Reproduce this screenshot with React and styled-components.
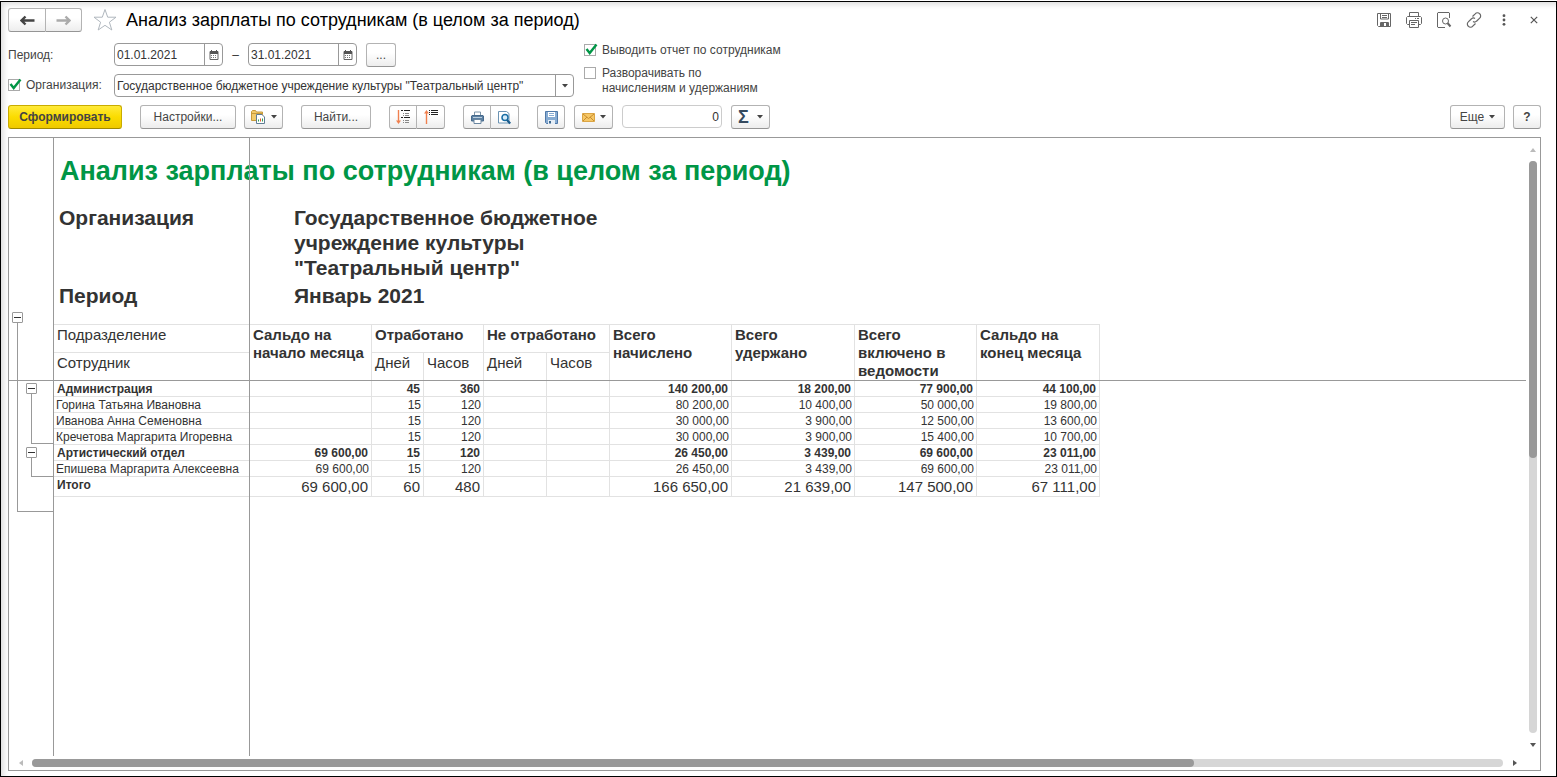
import React from 'react';
import styled, { createGlobalStyle, css } from 'styled-components';

const GlobalStyle = createGlobalStyle`
  * {
    box-sizing: border-box;
  }
  body {
    margin: 0;
    background: #fff;
    color: #333;
    font-family: "Liberation Sans", Arial, sans-serif;
    font-size: 12px;
  }
  button, input, select {
    font: inherit;
    color: inherit;
  }
`;

const Window = styled.div`
  display: flex;
  flex-direction: column;
  min-height: calc(100vh - 1px);
  margin-top: 1px;
  padding: 0 15px 5px 7px;
  border: 1px solid #000;
  box-shadow: inset 6px 6px 6px -4px #d8d8d8;
`;

const TitleBar = styled.header`
  display: flex;
  align-items: center;
  height: 36px;
  margin-bottom: 5px;
`;

const Title = styled.h1`
  flex: 1;
  margin: 0 0 0 9px;
  color: #000;
  font-size: 18px;
  font-weight: 400;
`;

const ButtonGroup = styled.div`
  display: flex;
  button + button {
    border-left: 0;
    border-radius: 0 3px 3px 0;
  }
  button:first-child:not(:last-child) {
    border-radius: 3px 0 0 3px;
  }
`;

const Button = styled.button`
  display: inline-flex;
  align-items: center;
  justify-content: center;
  gap: 5px;
  min-width: ${({ $width }) => $width || 28}px;
  height: 24px;
  padding: 0;
  border: 1px solid #b3b3b3;
  border-bottom-color: #959595;
  border-radius: 3px;
  background: linear-gradient(#fff 40%, #ededed);
  color: #444;
  font-size: 12px;
  ${({ $primary }) => $primary && css`
    border-color: #c9ac00;
    border-bottom-color: #a08900;
    background: linear-gradient(#ffea3a, #fbdc00 50%, #efc900);
    font-weight: 700;
  `}
`;

const StarButton = styled.button`
  display: flex;
  margin-left: 11px;
  padding: 0;
  border: 0;
  background: none;
`;

const WindowTools = styled.div`
  display: flex;
  gap: 6px;
  margin-right: -5px;
`;

const ToolButton = styled.button`
  display: flex;
  align-items: center;
  justify-content: center;
  width: 24px;
  height: 24px;
  padding: 0;
  border: 0;
  background: none;
  color: #666;
`;

const Filters = styled.div`
  display: flex;
  gap: 10px;
  margin-bottom: 8px;
`;

const FilterColumn = styled.div`
  display: flex;
  flex-direction: column;
  gap: 8px;
  width: 566px;
`;

const FilterRow = styled.div`
  display: flex;
  align-items: center;
  height: 23px;
`;

const FilterLabel = styled.div`
  width: 106px;
  color: #444;
`;

const Field = styled.div`
  display: flex;
  position: relative;
  width: ${({ $width }) => $width}px;
  height: 23px;
  overflow: hidden;
  border: 1px solid ${({ $muted }) => ($muted ? '#ccc' : '#999')};
  border-radius: 4px;
  background: #fff;
`;

const fieldText = css`
  flex: 1;
  min-width: 0;
  padding: 0 2px;
  border: 0;
  background: none;
  outline: 0;
`;

const TextInput = styled.input`
  ${fieldText}
  text-align: ${({ $align }) => $align || 'left'};
`;

const Select = styled.select`
  ${fieldText}
  appearance: none;
`;

const FieldButton = styled.button`
  display: flex;
  align-items: center;
  justify-content: center;
  width: 18px;
  padding: 0;
  border: 0;
  border-left: 1px solid #999;
  background: none;
`;

const SelectArrow = styled.span`
  display: flex;
  align-items: center;
  justify-content: center;
  width: 18px;
  border-left: 1px solid #999;
  pointer-events: none;
`;

const Dash = styled.span`
  width: 25px;
  text-align: center;
`;

const CheckColumn = styled.div`
  display: flex;
  flex-direction: column;
  gap: 8px;
`;

const CheckLabel = styled.label`
  display: flex;
  gap: 6px;
  max-width: 200px;
  color: #444;
  line-height: 15px;
`;

const Checkbox = styled.input`
  flex: none;
  appearance: none;
  width: 12px;
  height: 12px;
  margin: 1px 0 0;
  border: 1px solid #aaa;
  background: #fff;
`;

const CheckBoxWrap = styled.span`
  display: inline-flex;
  position: relative;
  height: 15px;
  svg {
    position: absolute;
    top: 0;
    left: 0;
    pointer-events: none;
  }
`;

const Toolbar = styled.div`
  display: flex;
  align-items: center;
  height: 24px;
  margin-bottom: 8px;
`;

const ToolSection = styled.div`
  display: flex;
  gap: ${({ $gap }) => $gap || 8}px;
  margin-right: 18px;
`;

const ToolEnd = styled.div`
  display: flex;
  gap: 8px;
  margin-left: auto;
`;

const PeriodButton = styled(Button)`
  margin-left: 9px;
`;

const Sigma = styled.span`
  padding-right: 3px;
  color: #34495e;
  font-size: 18px;
  font-weight: 700;
`;

const Sheet = styled.main`
  display: grid;
  flex: 1;
  grid-template: 1fr 14px / 1fr 14px;
  border: 1px solid #999;
`;

const Viewport = styled.div`
  display: flex;
  position: relative;
  min-width: 0;
  overflow: hidden;
`;

const Gutter = styled.div`
  flex: none;
  width: 45px;
  padding: 174px 0 0 3px;
  border-right: 1px solid #999;
`;

const Toggle = styled.button`
  display: flex;
  align-items: center;
  justify-content: center;
  width: 11px;
  height: 11px;
  padding: 0;
  border: 1px solid #999;
  border-radius: 1px;
  background: #fff;
  &::before {
    width: 7px;
    height: 1px;
    background: #333;
    content: "";
  }
`;

const Bracket = styled.div`
  height: ${({ $height }) => $height}px;
  margin-left: 5px;
  padding: ${({ $nested }) => ($nested ? '60px 0 0 8px' : 0)};
  border: solid #999;
  border-width: 0 0 1px 1px;
`;

const Branch = styled.div`
  margin-bottom: 3px;
`;

const Report = styled.div`
  flex: 1;
  padding-top: 17px;
`;

const ReportTitle = styled.h2`
  margin: 0 0 18px 6px;
  color: #009646;
  font-size: 27px;
  line-height: 32px;
`;

const Params = styled.dl`
  display: grid;
  grid-template-columns: 235px 320px;
  row-gap: 3px;
  margin: 0 0 16px 5px;
  font-size: 21px;
  font-weight: 700;
  line-height: 25px;
  dt, dd {
    margin: 0;
  }
`;

const Table = styled.table`
  width: 1046px;
  border-spacing: 0;
  border-top: 1px solid #e2e2e2;
  table-layout: fixed;
`;

const cell = css`
  padding: 0 2px 0 3px;
  border: solid #e2e2e2;
  border-width: 0 1px 1px 0;
`;

const HeadCell = styled.th`
  ${cell}
  height: 28px;
  padding-top: 1px;
  font-size: 15px;
  font-weight: ${({ $light }) => ($light ? 400 : 700)};
  line-height: 18px;
  text-align: left;
  vertical-align: top;
`;

const NameCell = styled.th`
  ${cell}
  padding-top: 1px;
  padding-left: ${({ $kind }) => ($kind === 'person' ? 2 : 3)}px;
  font-size: 12px;
  font-weight: ${({ $kind }) => ($kind === 'person' ? 400 : 700)};
  line-height: 14px;
  text-align: left;
  vertical-align: top;
  white-space: nowrap;
`;

const NumCell = styled.td`
  ${cell}
  padding-top: 1px;
  padding-right: ${({ $kind }) => ($kind === 'person' ? 2 : 3)}px;
  font-size: ${({ $kind }) => ($kind === 'total' ? 15 : 12)}px;
  font-weight: ${({ $kind }) => ($kind === 'group' ? 700 : 400)};
  line-height: ${({ $kind }) => ($kind === 'total' ? 18 : 14)}px;
  text-align: right;
`;

const FreezeRow = styled.div`
  position: absolute;
  top: 242px;
  right: 0;
  left: 0;
  height: 1px;
  background: #999;
`;

const FreezeColumn = styled.div`
  position: absolute;
  top: 0;
  bottom: 0;
  left: 240px;
  width: 1px;
  background: #999;
`;

const ScrollBar = styled.div`
  display: flex;
  flex-direction: ${({ $vertical }) => ($vertical ? 'column' : 'row')};
  align-items: center;
`;

const ScrollArrow = styled.button`
  display: flex;
  flex: none;
  align-items: center;
  justify-content: center;
  width: ${({ $vertical }) => ($vertical ? 14 : 23)}px;
  height: ${({ $vertical }) => ($vertical ? 23 : 14)}px;
  padding: 0;
  border: 0;
  background: none;
`;

const Track = styled.div`
  flex: 1;
  width: 8px;
  height: 8px;
  border-radius: 4px;
  background: #d6d6d6;
`;

const Thumb = styled.div`
  width: ${({ $vertical }) => ($vertical ? '100%' : '79%')};
  height: ${({ $vertical }) => ($vertical ? '52%' : '100%')};
  border-radius: 4px;
  background: #999;
`;

const Caret = () => (
  <svg width="6" height="4" viewBox="0 0 6 4">
    <path d="M0 0h6L3 3.5z" fill="#444" />
  </svg>
);

const TRIANGLES = {
  up: 'M0 5h6L3 1z',
  down: 'M0 1h6L3 5z',
  left: 'M5 0v6L1 3z',
  right: 'M1 0v6l4-3z',
};

const Triangle = ({ dir, color }) => (
  <svg width="6" height="6" viewBox="0 0 6 6">
    <path d={TRIANGLES[dir]} fill={color} />
  </svg>
);

const Arrow = ({ back }) => (
  <svg width="15" height="11" viewBox="0 0 15 11">
    <path
      d={back ? 'M14.5 5.500H2M5.500 1.500l-4 4 4 4' : 'M.5 5.500H13M9.500 1.500l4 4-4 4'}
      fill="none"
      stroke={back ? '#444' : '#aaa'}
      strokeWidth="2.400"
    />
  </svg>
);

const StarIcon = () => (
  <svg width="24" height="24" viewBox="0 0 24 24">
    <path
      d="M12 1.500l2.700 7.700h8.300l-6.600 5 2.400 7.800-6.800-4.700L5.200 22l2.400-7.800-6.600-5h8.300z"
      fill="#fff"
      stroke="#b0b7be"
    />
  </svg>
);

const CalendarIcon = () => (
  <svg width="10" height="10" viewBox="0 0 10 10">
    <path d="M1 1.500h8v8H1z" fill="#fff" stroke="#666" />
    <path d="M1 1h8v3H1z" fill="#555" />
    <path d="M2.500 0v2M7.500 0v2" stroke="#555" />
    <path d="M2 5.500h6M2 7.500h6" stroke="#777" strokeDasharray="1 1" />
  </svg>
);

const CheckMark = () => (
  <svg width="14" height="13" viewBox="0 0 14 13">
    <path d="M2.500 6l3.200 4L12.500 1.500" fill="none" stroke="#009646" strokeWidth="2.400" />
  </svg>
);

const SaveOutline = () => (
  <svg width="16" height="16" viewBox="0 0 16 16" fill="none" stroke="#666">
    <path d="M1.500 1.500h13v13h-12l-1-1z" />
    <path d="M4.500 1.500v5.500h8V1.500M6 3.500h5M6 5.500h5M4.500 14.500v-4h8v4" />
    <path d="M5 11h3v3H5zM10 11h2v3h-2z" fill="#666" stroke="none" />
  </svg>
);

const PrintOutline = () => (
  <svg width="18" height="16" viewBox="0 0 18 16" fill="none" stroke="#666">
    <path d="M4.500 4.500v-4h9v4M4.500 12.500h-2l-1-1v-6l1-1h13l1 1v6l-1 1h-2" />
    <path d="M4.500 8.500h9v7h-9zM6 10.500h6M6 12.500h4M10 6.500h1M12 6.500h2" />
  </svg>
);

const PreviewOutline = () => (
  <svg width="16" height="16" viewBox="0 0 16 16" fill="none" stroke="#666">
    <path d="M9 15.500H2l-.5-.5V1l.5-.5h11l.5.500v5" />
    <circle cx="9.500" cy="9" r="3" />
    <path d="M11.500 11l3 3.500" strokeWidth="2" />
  </svg>
);

const LinkOutline = () => (
  <svg width="16" height="16" viewBox="0 0 16 16" fill="none" stroke="#666" strokeWidth="1.200">
    <path d="M6.500 4.500l2.700-2.700a2.900 2.900 0 0 1 4.500 0 2.900 2.900 0 0 1 0 4.300L10.500 9.200a2.700 2.700 0 0 1-3.500.3" />
    <path d="M9.500 11.500l-2.700 2.700a2.900 2.900 0 0 1-4.500 0 2.900 2.900 0 0 1 0-4.300L5.500 6.800A2.700 2.700 0 0 1 9 6.500" />
  </svg>
);

const DotsIcon = () => (
  <svg width="4" height="12" viewBox="0 0 4 12" fill="#555">
    <circle cx="2" cy="1.700" r="1.400" />
    <circle cx="2" cy="6" r="1.400" />
    <circle cx="2" cy="10.300" r="1.400" />
  </svg>
);

const CloseIcon = () => (
  <svg width="8" height="8" viewBox="0 0 8 8">
    <path d="M.8.8l6.400 6.400M7.200.8L.8 7.200" stroke="#555" strokeWidth="1.200" />
  </svg>
);

const VariantsIcon = () => (
  <svg width="15" height="14" viewBox="0 0 15 14">
    <path d="M.5 10.500V1.500l1-1h3l1 1.500h6v8.500z" fill="#f2cb6c" stroke="#c79a3b" />
    <path d="M1 3.500h10" stroke="#c79a3b" />
    <path d="M5.500 4.500h5.500l2.500 2.500v6.500h-8z" fill="#fff" stroke="#607d94" />
    <path d="M7.500 11.500v-2M11.500 11.500v-3" stroke="#2e9e50" />
    <path d="M9.500 11.500v-3" stroke="#e4572e" />
  </svg>
);

const ExpandIcon = () => (
  <svg width="14" height="16" viewBox="0 0 14 16">
    <path d="M2.500 1v12" stroke="#f0804f" strokeWidth="1.400" />
    <path d="M0 11.500h5l-2.500 3.500z" fill="#f0804f" />
    <path d="M5 1.500h2M8 1.500h6M5 8.500h2M8 8.500h6" stroke="#222" />
    <path d="M7 4.500h1M9 4.500h4M7 6.500h1M9 6.500h4M7 11.500h1M9 11.500h4M7 13.500h1M9 13.500h4" stroke="#888" />
  </svg>
);

const CollapseIcon = () => (
  <svg width="14" height="16" viewBox="0 0 14 16">
    <path d="M2.500 15V3" stroke="#f0804f" strokeWidth="1.400" />
    <path d="M0 4.500h5L2.500 1z" fill="#f0804f" />
    <path d="M5 1.500h1M7 1.500h7M5 3.500h1M7 3.500h7M5 5.500h1M7 5.500h7" stroke="#222" />
  </svg>
);

const PrinterIcon = () => (
  <svg width="13" height="13" viewBox="0 0 13 13">
    <path d="M3.500 5V1h6v4" fill="#fff" stroke="#7d94a8" />
    <path d="M1 4.500h11l.5.500v5H.5V5z" fill="#5c80a3" stroke="#466a8c" />
    <path d="M2 6.500h9" stroke="#b9cede" />
    <path d="M3 8.500h7v4H3z" fill="#fff" stroke="#6a86a0" />
  </svg>
);

const PreviewIcon = () => (
  <svg width="13" height="15" viewBox="0 0 13 15">
    <path d="M.5 1.500h8l2.500 2v9.500H.5z" fill="#fff" stroke="#6b93b3" />
    <circle cx="7" cy="7.500" r="3" fill="#d6ecfa" stroke="#1a6ea4" strokeWidth="1.500" />
    <path d="M9 10l3.200 3.400" stroke="#1a5c8d" strokeWidth="2.200" />
  </svg>
);

const DiskIcon = () => (
  <svg width="13" height="13" viewBox="0 0 13 13">
    <path d="M.5.5h12v12h-11l-1-1z" fill="#86abd2" stroke="#4f78a8" />
    <path d="M3 1h7v5H3z" fill="#fff" />
    <path d="M4 2.500h5M4 4.500h5" stroke="#86abd2" />
    <path d="M3 9h7v4H3z" fill="#e6eef6" />
    <path d="M4 10h2v2.500H4z" fill="#3d678e" />
  </svg>
);

const MailIcon = () => (
  <svg width="13" height="9" viewBox="0 0 13 9">
    <path d="M.5.5h12v8H.5z" fill="#f6c766" stroke="#dba545" />
    <path d="M1 1l5.500 4.500L12 1M1 8l4-4M12 8L8 4" fill="none" stroke="#c98e2e" />
  </svg>
);

const WINDOW_TOOLS = [
  ['Сохранить', SaveOutline],
  ['Печать', PrintOutline],
  ['Просмотр', PreviewOutline],
  ['Ссылка', LinkOutline],
  ['Меню', DotsIcon],
  ['Закрыть', CloseIcon],
];

const COLUMNS = [196, 122, 52, 60, 63, 63, 122, 123, 122, 123];

const ROWS = [
  { kind: 'group', name: 'Администрация', values: ['', '45', '360', '', '', '140 200,00', '18 200,00', '77 900,00', '44 100,00'] },
  { kind: 'person', name: 'Горина Татьяна Ивановна', values: ['', '15', '120', '', '', '80 200,00', '10 400,00', '50 000,00', '19 800,00'] },
  { kind: 'person', name: 'Иванова Анна Семеновна', values: ['', '15', '120', '', '', '30 000,00', '3 900,00', '12 500,00', '13 600,00'] },
  { kind: 'person', name: 'Кречетова Маргарита Игоревна', values: ['', '15', '120', '', '', '30 000,00', '3 900,00', '15 400,00', '10 700,00'] },
  { kind: 'group', name: 'Артистический отдел', values: ['69 600,00', '15', '120', '', '', '26 450,00', '3 439,00', '69 600,00', '23 011,00'] },
  { kind: 'person', name: 'Епишева Маргарита Алексеевна', values: ['69 600,00', '15', '120', '', '', '26 450,00', '3 439,00', '69 600,00', '23 011,00'] },
  { kind: 'total', name: 'Итого', values: ['69 600,00', '60', '480', '', '', '166 650,00', '21 639,00', '147 500,00', '67 111,00'] },
];

function Check({ children, checked }) {
  return (
    <CheckLabel>
      <CheckBoxWrap>
        <Checkbox type="checkbox" defaultChecked={checked} />
        {checked && <CheckMark />}
      </CheckBoxWrap>
      <span>{children}</span>
    </CheckLabel>
  );
}

function DateField({ label, value }) {
  return (
    <Field $width={109}>
      <TextInput type="text" aria-label={label} defaultValue={value} />
      <FieldButton aria-label="Календарь"><CalendarIcon /></FieldButton>
    </Field>
  );
}

function Scroll({ vertical }) {
  return (
    <ScrollBar $vertical={vertical}>
      <ScrollArrow $vertical={vertical} aria-label="Назад">
        <Triangle dir={vertical ? 'up' : 'left'} color="#bbb" />
      </ScrollArrow>
      <Track><Thumb $vertical={vertical} /></Track>
      <ScrollArrow $vertical={vertical} aria-label="Вперед">
        <Triangle dir={vertical ? 'down' : 'right'} color="#555" />
      </ScrollArrow>
    </ScrollBar>
  );
}

function SalaryTable() {
  return (
    <Table>
      <colgroup>
        {COLUMNS.map((width, i) => <col key={i} width={width} />)}
      </colgroup>
      <thead>
        <tr>
          <HeadCell $light>Подразделение</HeadCell>
          <HeadCell rowSpan={2}>Сальдо на начало месяца</HeadCell>
          <HeadCell colSpan={2}>Отработано</HeadCell>
          <HeadCell colSpan={2}>Не отработано</HeadCell>
          <HeadCell rowSpan={2}>Всего начислено</HeadCell>
          <HeadCell rowSpan={2}>Всего удержано</HeadCell>
          <HeadCell rowSpan={2}>Всего включено в ведомости</HeadCell>
          <HeadCell rowSpan={2}>Сальдо на конец месяца</HeadCell>
        </tr>
        <tr>
          <HeadCell $light>Сотрудник</HeadCell>
          <HeadCell $light>Дней</HeadCell>
          <HeadCell $light>Часов</HeadCell>
          <HeadCell $light>Дней</HeadCell>
          <HeadCell $light>Часов</HeadCell>
        </tr>
      </thead>
      <tbody>
        {ROWS.map((row) => (
          <tr key={row.name}>
            <NameCell scope="row" $kind={row.kind}>{row.name}</NameCell>
            {row.values.map((value, i) => <NumCell key={i} $kind={row.kind}>{value}</NumCell>)}
          </tr>
        ))}
      </tbody>
    </Table>
  );
}

function App() {
  return (
    <Window>
      <GlobalStyle />
      <TitleBar>
        <ButtonGroup>
          <Button $width={38} aria-label="Назад"><Arrow back /></Button>
          <Button $width={36} aria-label="Вперед"><Arrow /></Button>
        </ButtonGroup>
        <StarButton aria-label="В избранное"><StarIcon /></StarButton>
        <Title>Анализ зарплаты по сотрудникам (в целом за период)</Title>
        <WindowTools>
          {WINDOW_TOOLS.map(([label, Icon]) => (
            <ToolButton key={label} aria-label={label}><Icon /></ToolButton>
          ))}
        </WindowTools>
      </TitleBar>

      <Filters>
        <FilterColumn>
          <FilterRow>
            <FilterLabel>Период:</FilterLabel>
            <DateField label="Начало периода" value="01.01.2021" />
            <Dash>–</Dash>
            <DateField label="Конец периода" value="31.01.2021" />
            <PeriodButton $width={30} aria-label="Выбрать период">...</PeriodButton>
          </FilterRow>
          <FilterRow>
            <FilterLabel><Check checked>Организация:</Check></FilterLabel>
            <Field $width={460}>
              <Select aria-label="Организация">
                <option>Государственное бюджетное учреждение культуры "Театральный центр"</option>
              </Select>
              <SelectArrow><Caret /></SelectArrow>
            </Field>
          </FilterRow>
        </FilterColumn>
        <CheckColumn>
          <Check checked>Выводить отчет по сотрудникам</Check>
          <Check>Разворачивать по<br />начислениям и удержаниям</Check>
        </CheckColumn>
      </Filters>

      <Toolbar>
        <ToolSection>
          <Button $primary $width={114}>Сформировать</Button>
        </ToolSection>
        <ToolSection>
          <Button $width={96}>Настройки...</Button>
          <Button $width={39} aria-label="Варианты отчета"><VariantsIcon /><Caret /></Button>
        </ToolSection>
        <ToolSection>
          <Button $width={70}>Найти...</Button>
        </ToolSection>
        <ToolSection>
          <ButtonGroup>
            <Button aria-label="Развернуть группы"><ExpandIcon /></Button>
            <Button aria-label="Свернуть группы"><CollapseIcon /></Button>
          </ButtonGroup>
        </ToolSection>
        <ToolSection>
          <ButtonGroup>
            <Button aria-label="Печать отчета"><PrinterIcon /></Button>
            <Button aria-label="Просмотр отчета"><PreviewIcon /></Button>
          </ButtonGroup>
        </ToolSection>
        <ToolSection $gap={9}>
          <Button aria-label="Сохранить отчет"><DiskIcon /></Button>
          <Button $width={39} aria-label="Отправить"><MailIcon /><Caret /></Button>
          <Field $width={100} $muted>
            <TextInput type="text" aria-label="Сумма" defaultValue="0" $align="right" />
          </Field>
          <Button $width={39} aria-label="Итог"><Sigma>Σ</Sigma><Caret /></Button>
        </ToolSection>
        <ToolEnd>
          <Button $width={55}>Еще <Caret /></Button>
          <Button><b>?</b></Button>
        </ToolEnd>
      </Toolbar>

      <Sheet>
        <Viewport>
          <Gutter>
            <Toggle aria-label="Свернуть отчет" />
            <Bracket $nested $height={189}>
              <Branch>
                <Toggle aria-label="Свернуть Администрация" />
                <Bracket $height={50} />
              </Branch>
              <Branch>
                <Toggle aria-label="Свернуть Артистический отдел" />
                <Bracket $height={19} />
              </Branch>
            </Bracket>
          </Gutter>
          <Report>
            <ReportTitle>Анализ зарплаты по сотрудникам (в целом за период)</ReportTitle>
            <Params>
              <dt>Организация</dt>
              <dd>Государственное бюджетное учреждение культуры "Театральный центр"</dd>
              <dt>Период</dt>
              <dd>Январь 2021</dd>
            </Params>
            <SalaryTable />
          </Report>
          <FreezeRow />
          <FreezeColumn />
        </Viewport>
        <Scroll vertical />
        <Scroll />
      </Sheet>
    </Window>
  );
}

export default App;
